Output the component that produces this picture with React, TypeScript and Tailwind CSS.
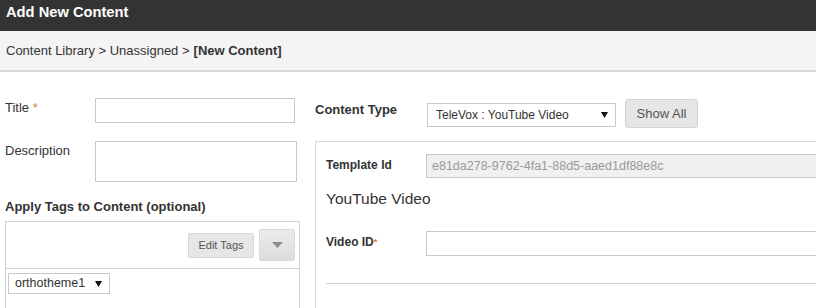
const font = { fontFamily: '"Liberation Sans", Arial, sans-serif' };

function Caret({ className }: { className?: string }) {
  return (
    <svg className={className} width="7" height="6" viewBox="0 0 7 6">
      <path d="M0 0h7L3.5 6z" fill="#111" />
    </svg>
  );
}

export default function App() {
  return (
    <div className="w-[816px] h-[308px] overflow-hidden bg-white text-[#333]" style={font}>
      {/* Title bar */}
      <div className="h-[31px] bg-[#333] pl-[6px] pt-[4px]">
        <h1 className="text-[14.7px] leading-[17px] font-bold text-white">Add New Content</h1>
      </div>

      {/* Breadcrumb */}
      <div className="h-[41px] bg-[#f4f4f4] border-b-2 border-[#d6d6d6] flex items-center pl-[6px] text-[13px] leading-[15px]">
        Content Library &gt; Unassigned &gt; <span className="font-bold ml-[4px]">[New Content]</span>
      </div>

      <div className="flex">
        {/* Left column */}
        <div className="w-[315px] shrink-0 pl-[5px] pt-[26px]">
          <div className="flex items-start">
            <label className="w-[90px] shrink-0 pt-[2px] text-[13px] leading-[15px]">
              Title <span className="text-[#e0782e]">*</span>
            </label>
            <div className="w-[200px] h-[25px] border border-[#c8c8c8] bg-white" />
          </div>

          <div className="flex items-start mt-[18px]">
            <label className="w-[90px] shrink-0 pt-[2px] text-[13px] leading-[15px]">Description</label>
            <div className="w-[202px] h-[41px] border border-[#c8c8c8] bg-white" />
          </div>

          <h2 className="mt-[17px] text-[13px] leading-[15px] font-bold">Apply Tags to Content (optional)</h2>

          <div className="mt-[7px] w-[295px] border border-[#d3d3d3] border-b-0 h-[100px]">
            <div className="h-[46px] flex items-center justify-end gap-[5px] pr-[4px]">
              <button className="w-[66px] h-[25px] rounded-[2px] border border-[#d8d8d8] bg-[#e6e6e6] text-[11px] text-[#555]">
                Edit Tags
              </button>
              <button className="w-[36px] h-[32px] rounded-[2px] border border-[#d8d8d8] bg-gradient-to-b from-[#ececec] to-[#dcdcdc] flex items-center justify-center">
                <svg width="11" height="6" viewBox="0 0 11 6">
                  <path d="M0 0h11L5.5 6z" fill="#8c8c8c" />
                </svg>
              </button>
            </div>
            <div className="border-t border-[#d3d3d3] pt-[4px] pl-[2px]">
              <div className="w-[102px] h-[21px] border border-[#c8c8c8] bg-white flex items-center justify-between pl-[6px] pr-[7px]">
                <span className="text-[12.5px] leading-[15px]">orthotheme1</span>
                <Caret />
              </div>
            </div>
          </div>
        </div>

        {/* Right column */}
        <div className="flex-1 min-w-0 pt-[27px]">
          <div className="flex items-start">
            <label className="w-[112px] shrink-0 pt-[3px] text-[13px] leading-[15px] font-bold">Content Type</label>
            <div className="mt-[4px] w-[189px] h-[24px] border border-[#c8c8c8] bg-white flex items-center justify-between pl-[8px] pr-[7px]">
              <span className="text-[12px] leading-[14px]">TeleVox : YouTube Video</span>
              <Caret />
            </div>
            <button className="ml-[9px] w-[73px] h-[29px] rounded-[3px] border border-[#d3d3d3] bg-[#e6e6e6] text-[13px] text-[#555]">
              Show All
            </button>
          </div>

          <div className="mt-[13px] w-[620px] border-l border-t border-[#d8d8d8] pl-[10px] pt-[12px] h-[200px]">
            <div className="flex items-start">
              <label className="w-[100px] shrink-0 pt-[4px] text-[12px] leading-[14px] font-bold">Template Id</label>
              <div className="w-[500px] shrink-0 h-[24px] border border-[#c8c8c8] bg-[#f0f0f0] flex items-center pl-[5px] text-[12.5px] text-[#999]">
                e81da278-9762-4fa1-88d5-aaed1df88e8c
              </div>
            </div>

            <div className="mt-[12px] text-[15.5px] leading-[18px]">YouTube Video</div>

            <div className="flex items-start mt-[23px]">
              <label className="w-[100px] shrink-0 pt-[4px] text-[12px] leading-[14px] font-bold">
                Video ID<span className="text-[#e0782e] text-[9px] align-top">*</span>
              </label>
              <div className="w-[500px] shrink-0 h-[25px] border border-[#c8c8c8] bg-white" />
            </div>

            <div className="mt-[27px] border-t border-[#cfcfcf]" />
          </div>
        </div>
      </div>
    </div>
  );
}
